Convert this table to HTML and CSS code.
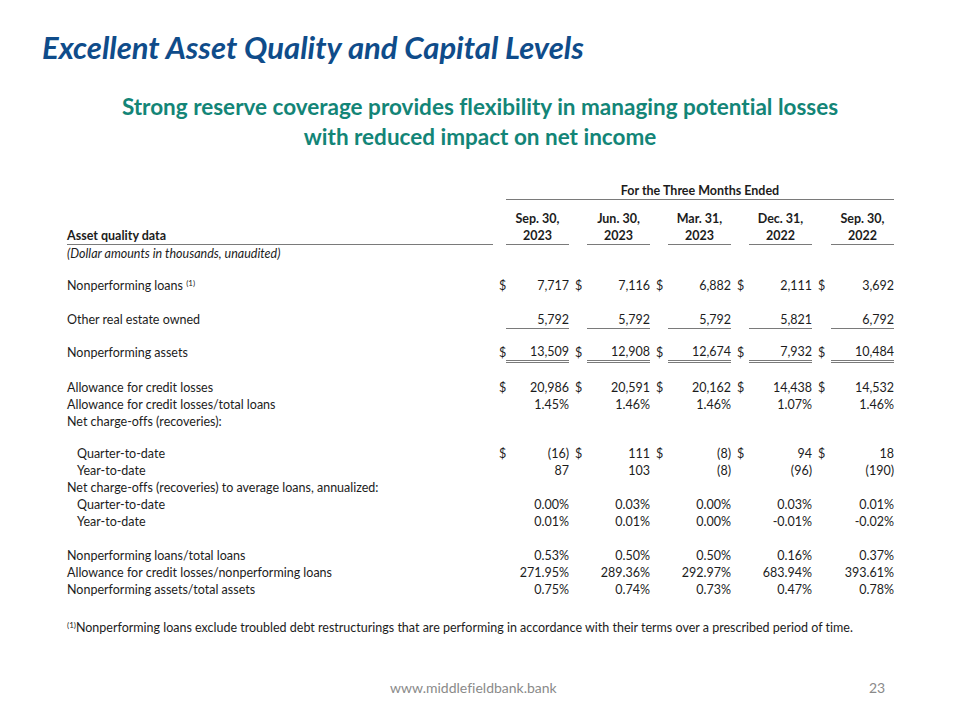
FILE: index.html
```html
<!DOCTYPE html>
<html lang="en">
<head>
<meta charset="utf-8">
<title>Excellent Asset Quality and Capital Levels</title>
<link rel="stylesheet" href="styles.css">
</head>
<body>
<div class="slide">
  <h1 class="title">Excellent Asset Quality and Capital Levels</h1>
  <p class="subtitle">Strong reserve coverage provides flexibility in managing potential losses<br>with reduced impact on net income</p>

  <div class="table">
    <div class="row period-row">
      <div class="period">For the Three Months Ended</div>
    </div>
    <div class="row head-row">
      <div class="label head-label">Asset quality data</div>
      <div class="d"></div><div class="v head">Sep. 30,<br>2023</div>
      <div class="d"></div><div class="v head">Jun. 30,<br>2023</div>
      <div class="d"></div><div class="v head">Mar. 31,<br>2023</div>
      <div class="d"></div><div class="v head">Dec. 31,<br>2022</div>
      <div class="d"></div><div class="v head">Sep. 30,<br>2022</div>
    </div>
    <div class="row">
      <div class="label note">(Dollar amounts in thousands, unaudited)</div>
    </div>
    <div class="gap g15"></div>
    <div class="row">
      <div class="label">Nonperforming loans <sup>(1)</sup></div>
      <div class="d">$</div><div class="v">7,717</div>
      <div class="d">$</div><div class="v">7,116</div>
      <div class="d">$</div><div class="v">6,882</div>
      <div class="d">$</div><div class="v">2,111</div>
      <div class="d">$</div><div class="v">3,692</div>
    </div>
    <div class="gap g17"></div>
    <div class="row">
      <div class="label">Other real estate owned</div>
      <div class="d"></div><div class="v single">5,792</div>
      <div class="d"></div><div class="v single">5,792</div>
      <div class="d"></div><div class="v single">5,792</div>
      <div class="d"></div><div class="v single">5,821</div>
      <div class="d"></div><div class="v single">6,792</div>
    </div>
    <div class="gap g15"></div>
    <div class="row">
      <div class="label">Nonperforming assets</div>
      <div class="d">$</div><div class="v double">13,509</div>
      <div class="d">$</div><div class="v double">12,908</div>
      <div class="d">$</div><div class="v double">12,674</div>
      <div class="d">$</div><div class="v double">7,932</div>
      <div class="d">$</div><div class="v double">10,484</div>
    </div>
    <div class="gap g16"></div>
    <div class="row">
      <div class="label">Allowance for credit losses</div>
      <div class="d">$</div><div class="v">20,986</div>
      <div class="d">$</div><div class="v">20,591</div>
      <div class="d">$</div><div class="v">20,162</div>
      <div class="d">$</div><div class="v">14,438</div>
      <div class="d">$</div><div class="v">14,532</div>
    </div>
    <div class="row">
      <div class="label">Allowance for credit losses/total loans</div>
      <div class="d"></div><div class="v">1.45%</div>
      <div class="d"></div><div class="v">1.46%</div>
      <div class="d"></div><div class="v">1.46%</div>
      <div class="d"></div><div class="v">1.07%</div>
      <div class="d"></div><div class="v">1.46%</div>
    </div>
    <div class="row">
      <div class="label">Net charge-offs (recoveries):</div>
    </div>
    <div class="gap g15"></div>
    <div class="row">
      <div class="label indent">Quarter-to-date</div>
      <div class="d">$</div><div class="v">(16)</div>
      <div class="d">$</div><div class="v">111</div>
      <div class="d">$</div><div class="v">(8)</div>
      <div class="d">$</div><div class="v">94</div>
      <div class="d">$</div><div class="v">18</div>
    </div>
    <div class="row">
      <div class="label indent">Year-to-date</div>
      <div class="d"></div><div class="v">87</div>
      <div class="d"></div><div class="v">103</div>
      <div class="d"></div><div class="v">(8)</div>
      <div class="d"></div><div class="v">(96)</div>
      <div class="d"></div><div class="v">(190)</div>
    </div>
    <div class="row">
      <div class="label">Net charge-offs (recoveries) to average loans, annualized:</div>
    </div>
    <div class="row">
      <div class="label indent">Quarter-to-date</div>
      <div class="d"></div><div class="v">0.00%</div>
      <div class="d"></div><div class="v">0.03%</div>
      <div class="d"></div><div class="v">0.00%</div>
      <div class="d"></div><div class="v">0.03%</div>
      <div class="d"></div><div class="v">0.01%</div>
    </div>
    <div class="row">
      <div class="label indent">Year-to-date</div>
      <div class="d"></div><div class="v">0.01%</div>
      <div class="d"></div><div class="v">0.01%</div>
      <div class="d"></div><div class="v">0.00%</div>
      <div class="d"></div><div class="v">-0.01%</div>
      <div class="d"></div><div class="v">-0.02%</div>
    </div>
    <div class="gap g17"></div>
    <div class="row">
      <div class="label">Nonperforming loans/total loans</div>
      <div class="d"></div><div class="v">0.53%</div>
      <div class="d"></div><div class="v">0.50%</div>
      <div class="d"></div><div class="v">0.50%</div>
      <div class="d"></div><div class="v">0.16%</div>
      <div class="d"></div><div class="v">0.37%</div>
    </div>
    <div class="row">
      <div class="label">Allowance for credit losses/nonperforming loans</div>
      <div class="d"></div><div class="v">271.95%</div>
      <div class="d"></div><div class="v">289.36%</div>
      <div class="d"></div><div class="v">292.97%</div>
      <div class="d"></div><div class="v">683.94%</div>
      <div class="d"></div><div class="v">393.61%</div>
    </div>
    <div class="row">
      <div class="label">Nonperforming assets/total assets</div>
      <div class="d"></div><div class="v">0.75%</div>
      <div class="d"></div><div class="v">0.74%</div>
      <div class="d"></div><div class="v">0.73%</div>
      <div class="d"></div><div class="v">0.47%</div>
      <div class="d"></div><div class="v">0.78%</div>
    </div>
  </div>

  <p class="footnote"><sup>(1)</sup>Nonperforming loans exclude troubled debt restructurings that are performing in accordance with their terms over a prescribed period of time.</p>

  <footer class="footer">
    <span class="url">www.middlefieldbank.bank</span>
    <span class="page">23</span>
  </footer>
</div>
</body>
</html>
```

FILE: styles.css
```css
html, body {
  margin: 0;
  padding: 0;
  background: #ffffff;
}

.slide {
  width: 960px;
  height: 720px;
  position: relative;
  overflow: hidden;
  font-family: Lato, "Open Sans", "Liberation Sans", sans-serif;
  color: #1c1c1c;
  font-variant-ligatures: none;
}

.title {
  margin: 0;
  padding: 30px 0 0 42px;
  height: 34px;
  line-height: 34px;
  font-size: 31px;
  font-weight: 700;
  font-style: italic;
  color: #0f4c8a;
}

.subtitle {
  margin: 28px 0 0 0;
  text-align: center;
  font-size: 22.5px;
  line-height: 30px;
  font-weight: 700;
  color: #138577;
}

.table {
  margin: 30px 0 0 67px;
  width: 827px;
  font-size: 12.5px;
}

.row {
  display: grid;
  grid-template-columns: 426px 13px 63px 18px 63px 18px 63px 18px 63px 19px 63px;
  min-height: 17px;
  line-height: 17px;
}

.gap { height: 16px; }
.g15 { height: 15px; }
.g16 { height: 16px; }
.g17 { height: 17px; }

.period-row .period {
  grid-column: 3 / 12;
  text-align: center;
  font-weight: 700;
  border-bottom: 1px solid #7a7a7a;
}

.head-row {
  margin-top: 10px;
}

.head-label {
  align-self: end;
  font-weight: 700;
  border-bottom: 1px solid #7a7a7a;
}

.v.head {
  text-align: center;
  font-weight: 700;
  border-bottom: 1px solid #7a7a7a;
}

.label {
  white-space: nowrap;
}

.note {
  font-style: italic;
}

.indent {
  padding-left: 10px;
}

.d {
  padding-left: 6px;
}

.v {
  text-align: right;
  white-space: nowrap;
}

.single {
  border-bottom: 1px solid #7a7a7a;
}

.double {
  border-bottom: 3px double #7a7a7a;
  line-height: 16px;
}

sup {
  font-size: 8px;
  line-height: 0;
  vertical-align: 4px;
}

.footnote {
  margin: 21px 0 0 67px;
  font-size: 12.5px;
  line-height: 17px;
  white-space: nowrap;
}

.footer {
  position: absolute;
  left: 0;
  right: 0;
  top: 679px;
  height: 18px;
  line-height: 18px;
  color: #8a8a8a;
  font-size: 14px;
}

.url {
  position: absolute;
  left: 390px;
}

.page {
  position: absolute;
  left: 869px;
}
```
